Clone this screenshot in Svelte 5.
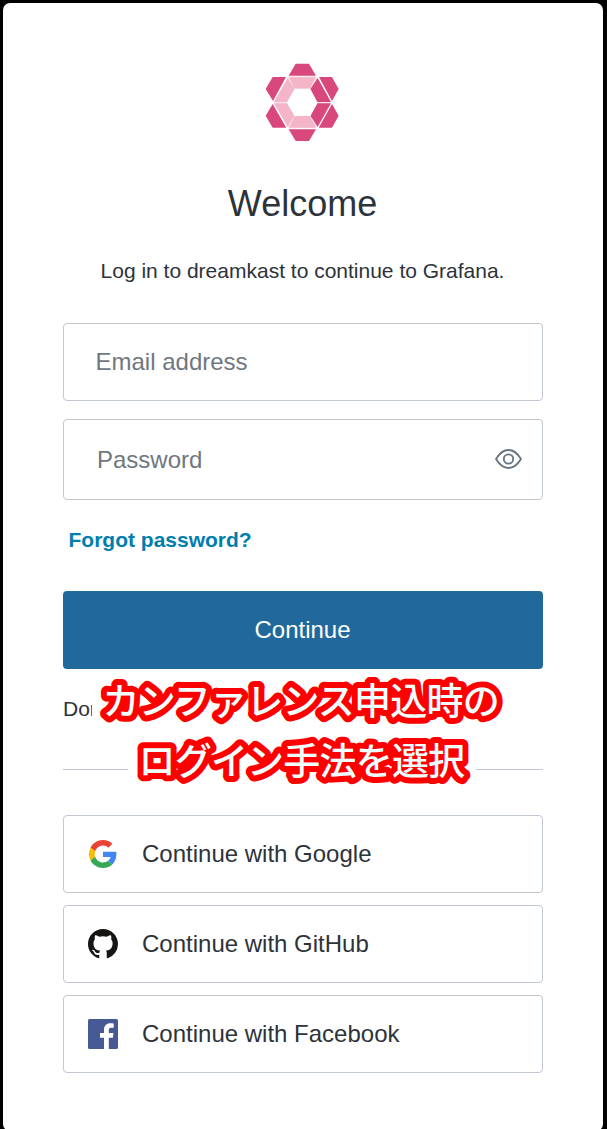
<script>
  let email = $state('');
  let password = $state('');
  let shown = $state(false);
</script>

<main class="card">
  <svg class="logo" viewBox="45 24 222 234" aria-label="dreamkast">
    <path d="M117 64H197L243 141L200 220H116L71 141Z" fill="#fbe6ed" />
    <g fill="#d9487d">
      <path d="M137 26H177L198 62H116Z" />
      <path d="M68 66H108L69 138L47 102Z" />
      <path d="M207 66H246L266 102L246 138Z" />
      <path d="M68 147L109 218H68L47 182Z" />
      <path d="M246 147L266 182L246 218H206Z" />
      <path d="M116 223H198L177 258H137Z" />
      <path d="M203 69L243 141H202L181 102Z" />
      <path d="M202 145H243L203 216L181 182Z" />
    </g>
    <g fill="#f3b5c7">
      <path d="M117 67H197L180 101H134Z" />
      <path d="M113 69L134 102L111 141H72Z" />
      <path d="M72 145H111L134 182L113 216Z" />
      <path d="M134 183H180L198 218H117Z" />
    </g>
    <path d="M134 101H180L202 143L181 183H134L111 143Z" fill="#fff" />
  </svg>

  <h1>Welcome</h1>
  <p class="intro">Log in to dreamkast to continue to Grafana.</p>

  <form onsubmit={(e) => e.preventDefault()}>
    <div class="field email"><input type="email" placeholder="Email address" aria-label="Email address" bind:value={email} /></div>
    <div class="field password">
      <input type={shown ? 'text' : 'password'} placeholder="Password" aria-label="Password" bind:value={password} />
      <button class="eye" type="button" aria-label="Show password" onclick={() => (shown = !shown)}>
        <svg viewBox="0 0 28 20" fill="none" stroke="#65737e" stroke-width="1.8">
          <path d="M1 10C4.500 4.300 8.300 1 13.500 1S22.500 4.300 26 10C22.500 15.700 18.700 19 13.500 19S4.500 15.700 1 10Z" stroke-linejoin="round" />
          <circle cx="13.500" cy="10" r="4.700" />
        </svg>
      </button>
    </div>
    <a class="forgot" href="#reset">Forgot password?</a>
    <button class="submit" type="submit">Continue</button>
  </form>

  <section class="choice">
    <div class="signup">Don</div>
    <div class="divider"><span></span><span></span></div>
    <svg class="note" viewBox="0 0 480 130">
      <text x="39.500" y="45.500">カンファレンス申込時の</text>
      <text x="75.500" y="105.500">ログイン手法を選択</text>
    </svg>
  </section>

  <div class="providers">
    <button>
      <svg viewBox="0 0 48 48" class="google">
        <path fill="#EA4335" d="M24 9.500c3.540 0 6.710 1.220 9.210 3.600l6.850-6.850C35.900 2.380 30.470 0 24 0 14.620 0 6.510 5.380 2.560 13.220l7.980 6.190C12.430 13.720 17.740 9.500 24 9.500z" />
        <path fill="#4285F4" d="M46.980 24.550c0-1.570-.15-3.090-.38-4.550H24v9.020h12.940c-.58 2.960-2.260 5.480-4.780 7.180l7.730 6c4.510-4.180 7.090-10.360 7.090-17.650z" />
        <path fill="#FBBC05" d="M10.530 28.590A14.500 14.500 0 0 1 9.770 24c0-1.600.27-3.140.76-4.590l-7.980-6.190A23.900 23.900 0 0 0 0 24c0 3.880.92 7.540 2.560 10.780z" />
        <path fill="#34A853" d="M24 48c6.480 0 11.930-2.130 15.890-5.810l-7.730-6C30 37.640 27.240 38.490 24 38.490c-6.260 0-11.570-4.220-13.470-9.910l-7.980 6.190C6.510 42.620 14.620 48 24 48z" />
      </svg>
      <span>Continue with Google</span>
    </button>
    <button>
      <svg viewBox="0 0 16 16" fill="#161514">
        <path d="M8 0C3.580 0 0 3.580 0 8c0 3.540 2.290 6.530 5.470 7.590.4.070.55-.17.55-.38 0-.19-.01-.82-.01-1.490-2.010.37-2.530-.49-2.690-.94-.09-.23-.48-.94-.82-1.130-.28-.15-.68-.52-.01-.53.63-.01 1.080.58 1.230.82.72 1.210 1.870.87 2.330.66.07-.52.28-.87.51-1.070-1.780-.2-3.640-.89-3.640-3.950 0-.87.31-1.590.82-2.150-.08-.2-.36-1.020.08-2.120 0 0 .67-.21 2.200.82.640-.18 1.320-.27 2-.27s1.360.09 2 .27c1.530-1.040 2.200-.82 2.200-.82.440 1.100.160 1.920.08 2.120.510.560.820 1.270.820 2.150 0 3.070-1.870 3.750-3.650 3.950.290.250.540.730.540 1.480 0 1.070-.01 1.930-.01 2.200 0 .21.150.46.550.38A8.010 8.010 0 0 0 16 8c0-4.420-3.580-8-8-8Z" />
      </svg>
      <span>Continue with GitHub</span>
    </button>
    <button>
      <svg viewBox="0 0 30 30">
        <rect width="30" height="30" rx="1.600" fill="#475993" />
        <path fill="#fff" d="M16 30V18.700H12V14.100H16V11C16 6.700 18.600 4.300 22.400 4.300C24 4.300 25.200 4.400 25.700 4.500V8.700H23.200C21.100 8.700 20.800 9.700 20.800 11.200V14.100H25.500L24.900 18.700H20.800V30Z" />
      </svg>
      <span>Continue with Facebook</span>
    </button>
  </div>
</main>

<style>
  :global(body) { background: #000; overflow: hidden; }
  .card {
    box-sizing: border-box;
    display: flex;
    flex-direction: column;
    width: 600px;
    height: 1128px;
    margin: 3px 0 0 3px;
    padding: 60px 60px 40px;
    background: #fff;
    border-radius: 7px;
    color: #2d333a;
    font-family: "Liberation Sans", Arial, sans-serif;
  }
  .logo { width: 74px; height: 78px; margin-left: 202px; flex: none; }
  h1 { margin: 42px 1px 0 0; font-size: 36px; font-weight: 400; line-height: 42px; text-align: center; }
  .intro { margin: 30px 1px 0 0; font-size: 21px; line-height: 32px; text-align: center; white-space: nowrap; }
  form { display: flex; flex-direction: column; margin-top: 36px; }
  .field { display: flex; align-items: center; box-sizing: border-box; border: 1px solid #c2c8d0; border-radius: 4px; }
  .email { height: 78px; padding-left: 31.5px; }
  .password { height: 81px; margin-top: 18px; padding: 0 19px 0 33px; }
  input { flex: 1; min-width: 0; padding: 0; border: 0; outline: 0; background: none; font: 24px "Liberation Sans", Arial, sans-serif; color: #2d333a; }
  input::placeholder { color: #6f7780; opacity: 1; }
  button { font-family: inherit; cursor: pointer; }
  .eye { display: flex; padding: 0; margin-bottom: 1px; border: 0; background: none; }
  .eye svg { width: 28px; height: 20px; }
  .forgot { align-self: flex-start; margin: 24px 0 0 5.5px; font-size: 21px; font-weight: 700; line-height: 32px; color: #007ead; text-decoration: none; }
  .submit { height: 78px; margin-top: 35px; padding: 0 7px 0 6px; border: 0; border-radius: 4px; background: #21699b; color: #fff; font-size: 24px; }
  .choice { position: relative; flex: none; height: 146px; }
  .signup { width: 29px; padding-top: 24px; overflow: hidden; font-size: 21px; line-height: 32px; }
  .divider { display: flex; justify-content: space-between; margin-top: 44px; }
  .divider span { width: 65px; height: 1px; background: #c2c8d0; }
  .divider span:last-child { width: 67px; }
  .note { position: absolute; top: 0; left: 0; width: 480px; height: 130px; }
  .note text {
    font: 500 37px "Noto Sans CJK JP", sans-serif;
    letter-spacing: -0.8px;
    fill: #f0ffff;
    stroke: #f00;
    stroke-width: 12px;
    stroke-linejoin: round;
    paint-order: stroke fill;
  }
  .providers { display: flex; flex-direction: column; gap: 12px; }
  .providers button { display: flex; align-items: center; gap: 24px; box-sizing: border-box; height: 78px; padding: 0 24px; border: 1px solid #c2c8d0; border-radius: 4px; background: #fff; color: #2d333a; font-size: 24px; }
  .providers svg { width: 30px; height: 30px; flex: none; }
  .providers .google { width: 28px; height: 28px; margin: 0 1px; }
</style>
